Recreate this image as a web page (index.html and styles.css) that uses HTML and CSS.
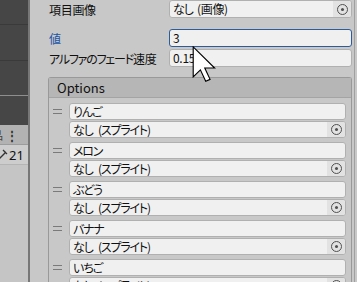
FILE: index.html
```html
<!DOCTYPE html>
<html lang="ja">
<head>
<meta charset="utf-8">
<link rel="stylesheet" href="styles.css">
</head>
<body>
<div class="app">
  <aside class="left">
    <div class="dark">
      <div class="dline l1"></div>
      <div class="dline l2"></div>
      <div class="dline l3"></div>
    </div>
    <div class="lhead"><span class="cut">品</span><span class="dots">⋮</span></div>
    <div class="lrow"><svg class="pen" width="8" height="12" viewBox="0 0 8 12"><path d="M-2 11 L6 3 M3 1 L7 5" stroke="#333" stroke-width="1.3" fill="none"/></svg><span class="num">21</span></div>
    <div class="lrest"></div>
  </aside>
  <div class="sep"></div>
  <main class="main">
    <div class="prop">
      <span class="label">項目画像</span>
      <div class="field obj"><span class="ftext"><span class="kana">なし</span> (画像)</span><span class="picker"><i class="ring"></i></span></div>
    </div>
    <div class="prop gap">
      <span class="label blue">値</span>
      <div class="field focus"><span class="ftext">3</span></div>
    </div>
    <div class="prop">
      <span class="label"><span class="kana">アルファのフェード</span>速度</span>
      <div class="field"><span class="ftext">0.15</span></div>
    </div>

    <section class="box">
      <div class="boxhead">Options</div>
      <div class="boxbody">
        <div class="item">
          <span class="handle"></span>
          <div class="pair">
            <div class="field"><span class="ftext kana">りんご</span></div>
            <div class="field obj"><span class="ftext kana">なし (スプライト)</span><span class="picker"><i class="ring"></i></span></div>
          </div>
        </div>
        <div class="item">
          <span class="handle"></span>
          <div class="pair">
            <div class="field"><span class="ftext kana">メロン</span></div>
            <div class="field obj"><span class="ftext kana">なし (スプライト)</span><span class="picker"><i class="ring"></i></span></div>
          </div>
        </div>
        <div class="item">
          <span class="handle"></span>
          <div class="pair">
            <div class="field"><span class="ftext kana">ぶどう</span></div>
            <div class="field obj"><span class="ftext kana">なし (スプライト)</span><span class="picker"><i class="ring"></i></span></div>
          </div>
        </div>
        <div class="item">
          <span class="handle"></span>
          <div class="pair">
            <div class="field"><span class="ftext kana">バナナ</span></div>
            <div class="field obj"><span class="ftext kana">なし (スプライト)</span><span class="picker"><i class="ring"></i></span></div>
          </div>
        </div>
        <div class="item">
          <span class="handle"></span>
          <div class="pair">
            <div class="field"><span class="ftext kana">いちご</span></div>
            <div class="field obj"><span class="ftext kana">なし (スプライト)</span><span class="picker"><i class="ring"></i></span></div>
          </div>
        </div>
      </div>
    </section>
  </main>
  <div class="edge"></div>
</div>
<svg class="cursor" width="24" height="36" viewBox="0 0 12.4 19"><path d="M0.5 0.5 L0.5 16.3 L4.3 12.6 L7.1 18.6 L9.4 17.6 L6.6 11.6 L11.8 11.6 Z" fill="#fff" stroke="#000" stroke-width="0.6" stroke-linejoin="miter"/></svg>
</body>
</html>
```
FILE: styles.css
```css
* { box-sizing: border-box; }
html, body { margin: 0; padding: 0; }
body {
  width: 357px;
  height: 282px;
  overflow: hidden;
  background: #c8c8c8;
  font-family: "Noto Sans CJK JP", "Noto Sans", sans-serif;
  font-size: 12px;
  font-feature-settings: "palt";
  letter-spacing: -0.3px;
  word-spacing: 2px;
  color: #101010;
  position: relative;
}
.kana { letter-spacing: -1.2px; word-spacing: 4px; }
.app {
  display: flex;
  height: 282px;
}
.left {
  width: 28px;
  display: flex;
  flex-direction: column;
  overflow: hidden;
  flex: none;
}
.dark {
  height: 125px;
  background: #464646;
  position: relative;
  flex: none;
}
.dline { position: absolute; left: 0; right: 0; height: 1px; background: #3a3a3a; }
.l1 { top: 24px; }
.l2 { top: 60px; }
.l3 { top: 95px; background: #8e8e8e; }
.lhead {
  height: 20px;
  background: #b2b2b2;
  border-bottom: 1px solid #9c9c9c;
  display: flex;
  align-items: center;
  flex: none;
}
.cut { margin-left: -8px; font-size: 11px; color: #444; width: 11px; flex: none; }
.dots { margin-left: 3px; font-weight: bold; color: #333; font-size: 12px; }
.lrow {
  height: 20px;
  background: #cdcdcd;
  border-bottom: 1px solid #b5b5b5;
  display: flex;
  align-items: center;
  flex: none;
}
.pen { flex: none; }
.num { font-family: "Noto Sans", sans-serif; font-size: 13px; margin-left: 1px; color: #111; letter-spacing: 0; }
.lrest { flex: 1; background: #c5c5c5; }
.sep { width: 2px; background: #777; flex: none; }
.edge { width: 1px; margin-left: 2px; background: #a0a0a0; flex: none; margin-right: 2px; }
.main {
  flex: 1;
  padding-left: 18px;
  min-width: 0;
  display: flex;
  flex-direction: column;
}
.prop {
  display: flex;
  align-items: center;
  height: 18px;
  margin-bottom: 2px;
  flex: none;
}
.prop.gap { margin-top: 9px; }
.label {
  width: 121px;
  flex: none;
  padding-left: 1px;
  white-space: nowrap;
}
.blue { color: #1b55a6; }
.field {
  flex: 1;
  height: 18px;
  background: #f0f0f0;
  border: 1px solid #b0b0b0;
  border-radius: 3px;
  display: flex;
  align-items: center;
  overflow: hidden;
  min-width: 0;
}
.field.focus { border-color: #2c5c9a; }
.ftext {
  flex: 1;
  padding-left: 3px;
  white-space: nowrap;
  line-height: 16px;
}
.picker {
  width: 18px;
  align-self: stretch;
  background: #e2e2e2;
  display: flex;
  align-items: center;
  justify-content: center;
  flex: none;
}
.ring {
  width: 11px;
  height: 11px;
  border: 1.2px solid #505050;
  border-radius: 50%;
  position: relative;
  display: block;
}
.ring::after {
  content: "";
  position: absolute;
  left: 50%;
  top: 50%;
  width: 3px;
  height: 3px;
  margin: -1.5px 0 0 -1.5px;
  background: #505050;
  border-radius: 50%;
}
.box {
  margin-top: 8px;
  border: 1px solid #999;
  border-radius: 3px 3px 0 0;
  border-bottom: none;
  flex: 1;
}
.boxhead {
  height: 20px;
  background: #b6b6b6;
  border-bottom: 1px solid #a4a4a4;
  padding-left: 8px;
  display: flex;
  align-items: center;
  font-size: 13px;
  letter-spacing: 0;
  color: #111;
}
.boxbody {
  padding: 5px 5px 0 4px;
  display: flex;
  flex-direction: column;
  gap: 4px;
}
.item {
  display: flex;
  align-items: flex-start;
}
.handle {
  width: 9px;
  height: 5px;
  border-top: 1px solid #7a7a7a;
  border-bottom: 1px solid #7a7a7a;
  margin: 6px 7px 0 0;
  flex: none;
}
.pair {
  flex: 1;
  display: flex;
  flex-direction: column;
  gap: 1px;
  min-width: 0;
}
.pair .field { flex: none; height: 17px; }
.cursor {
  position: absolute;
  left: 192px;
  top: 46px;
}
```
